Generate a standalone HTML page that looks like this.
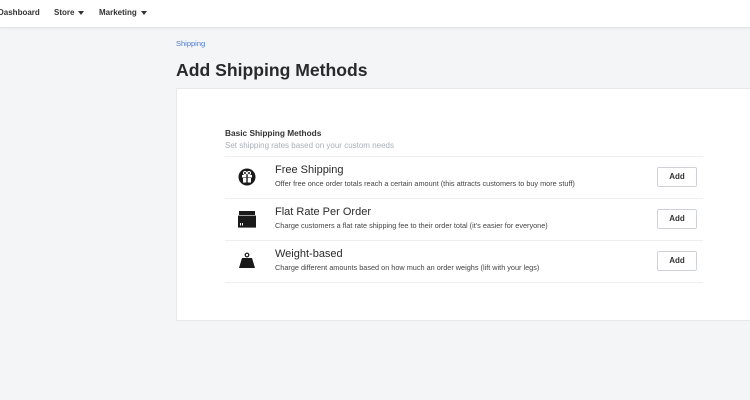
<!DOCTYPE html>
<html><head><meta charset="utf-8"><style>
*{margin:0;padding:0;box-sizing:border-box}
body{width:750px;height:400px;overflow:hidden;background:#f4f5f7;font-family:"Liberation Sans",sans-serif;color:#222;position:relative}
.hdr{position:absolute;left:0;top:0;width:750px;height:28px;background:#fff;border-bottom:1px solid #e3e5e8;box-shadow:0 1px 2px rgba(0,0,0,.05)}
.nav{position:absolute;top:8px;font-size:8px;font-weight:bold;color:#333}
.car{display:inline-block;width:0;height:0;border-left:3px solid transparent;border-right:3px solid transparent;border-top:4px solid #333;margin-left:4px;vertical-align:middle}
.crumb{position:absolute;left:176px;top:39px;font-size:7.5px;color:#4a7bd0}
h1{position:absolute;left:176px;top:60px;font-size:17.6px;font-weight:bold;color:#2a2a2a}
.card{position:absolute;left:176px;top:88px;width:580px;height:233px;background:#fff;border:1px solid #e6e8eb}
.t{position:absolute;left:225px;top:128px;font-size:8.3px;font-weight:bold;color:#333}
.s{position:absolute;left:225px;top:141px;font-size:8px;color:#aab0b8}
.line{position:absolute;left:225px;width:478px;height:1px;background:#eceef0}
.row{position:absolute;left:275px}
.row b{display:block;font-weight:normal;font-size:11px;color:#2a2a2a}
.row span{display:block;font-size:7.3px;color:#444;margin-top:3px}
.btn{position:absolute;left:657px;width:40px;height:20px;border:1px solid #cfd3d8;border-radius:2px;font-size:8px;font-weight:bold;text-align:center;line-height:18px;color:#333;background:#fff}
svg{position:absolute}
</style></head><body>
<div class="hdr">
<div class="nav" style="left:-2px">Dashboard</div>
<div class="nav" style="left:54px">Store<span class="car"></span></div>
<div class="nav" style="left:99px">Marketing<span class="car"></span></div>
</div>
<div class="crumb">Shipping</div>
<h1>Add Shipping Methods</h1>
<div class="card"></div>
<div class="t">Basic Shipping Methods</div>
<div class="s">Set shipping rates based on your custom needs</div>
<div class="line" style="top:156px"></div>
<div class="line" style="top:198px"></div>
<div class="line" style="top:240px"></div>
<div class="line" style="top:282px"></div>

<svg style="left:238px;top:168px" width="18" height="18" viewBox="0 0 18 18"><circle cx="9" cy="9" r="8.5" fill="#1a1a1a"/><rect x="4" y="7" width="10" height="2.5" fill="#fff"/><rect x="5" y="10" width="8" height="4.5" fill="#fff"/><rect x="8.3" y="7" width="1.4" height="8" fill="#1a1a1a"/><circle cx="7" cy="5" r="1.5" fill="none" stroke="#fff" stroke-width="1"/><circle cx="11" cy="5" r="1.5" fill="none" stroke="#fff" stroke-width="1"/></svg>
<div class="row" style="top:164px"><b>Free Shipping</b><span>Offer free once order totals reach a certain amount (this attracts customers to buy more stuff)</span></div>
<div class="btn" style="top:167px">Add</div>

<svg style="left:238px;top:210px" width="18" height="18" viewBox="0 0 18 18"><rect x="1" y="1" width="16" height="4" fill="#1a1a1a"/><rect x="0" y="5.6" width="18" height="12" fill="#1a1a1a"/><rect x="2" y="13" width="1" height="2.5" fill="#fff"/><rect x="4" y="13" width="1" height="2.5" fill="#fff"/></svg>
<div class="row" style="top:206px"><b>Flat Rate Per Order</b><span>Charge customers a flat rate shipping fee to their order total (it's easier for everyone)</span></div>
<div class="btn" style="top:209px">Add</div>

<svg style="left:238px;top:252px" width="18" height="18" viewBox="0 0 18 18"><circle cx="9" cy="3" r="1.8" fill="none" stroke="#1a1a1a" stroke-width="1.2"/><path d="M4 6 L14 6 L17 16 L1 16 Z" fill="#1a1a1a"/></svg>
<div class="row" style="top:248px"><b>Weight-based</b><span>Charge different amounts based on how much an order weighs (lift with your legs)</span></div>
<div class="btn" style="top:251px">Add</div>
</body></html>
